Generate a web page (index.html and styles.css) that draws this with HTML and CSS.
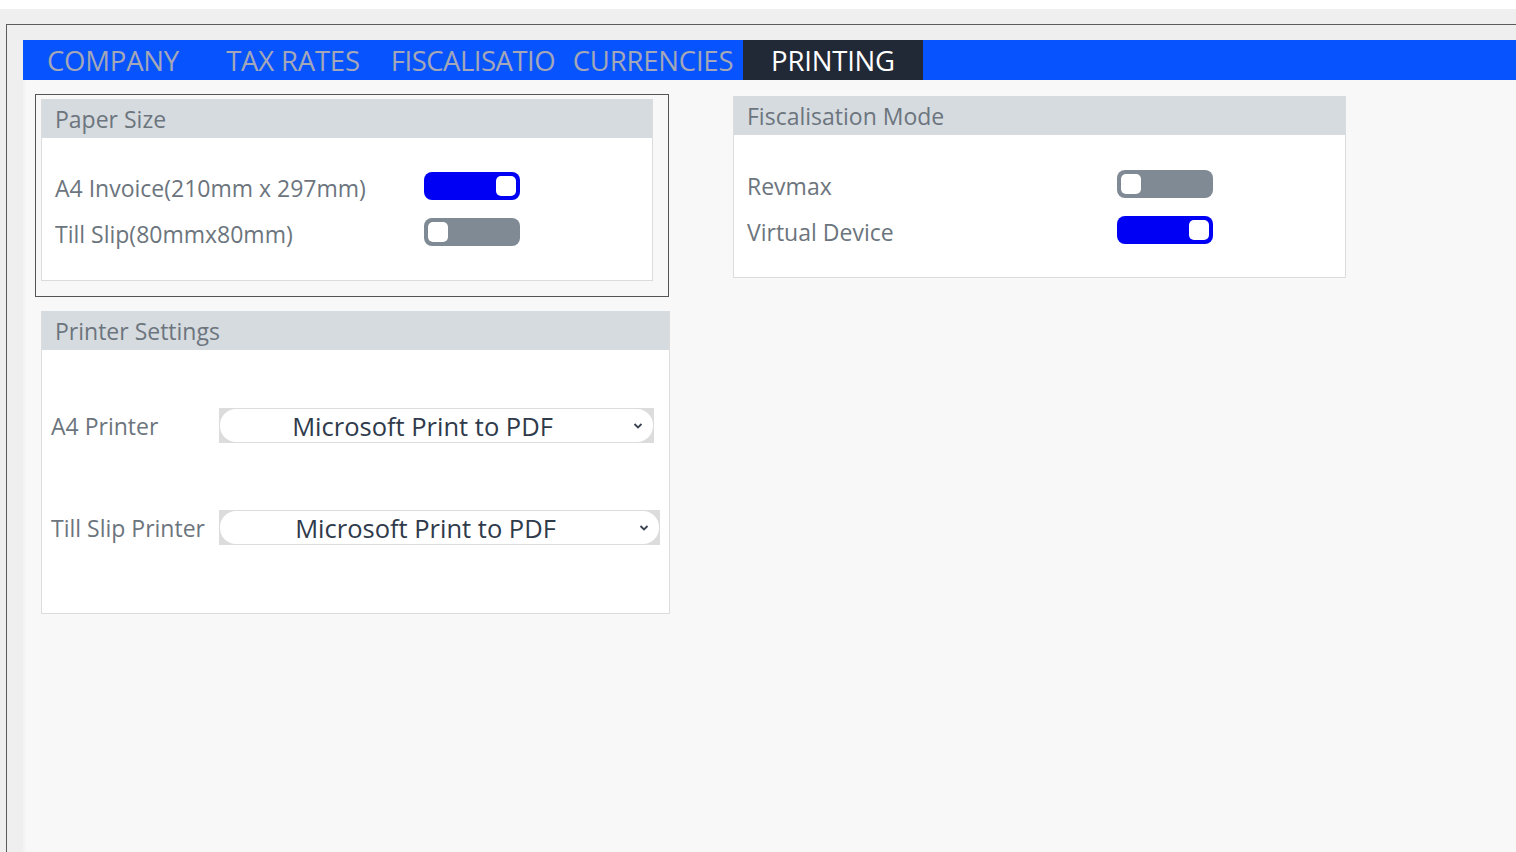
FILE: index.html
```html
<!DOCTYPE html>
<html>
<head>
<meta charset="utf-8">
<link rel="stylesheet" href="styles.css">
</head>
<body>
<div class="window">
  <div class="frame">
    <nav class="tabs">
      <div class="tab">COMPANY</div>
      <div class="tab">TAX RATES</div>
      <div class="tab tab-wrap">FISCALISATION</div>
      <div class="tab">CURRENCIES</div>
      <div class="tab active">PRINTING</div>
    </nav>
    <main class="content">
      <div class="col-left">
        <div class="focus-box">
          <section class="card card-paper">
            <header class="card-head">Paper Size</header>
            <div class="card-body toggles">
              <div class="row">
                <span class="label">A4 Invoice(210mm x 297mm)</span>
                <span class="switch on"><span class="knob"></span></span>
              </div>
              <div class="row">
                <span class="label">Till Slip(80mmx80mm)</span>
                <span class="switch"><span class="knob"></span></span>
              </div>
            </div>
          </section>
        </div>
        <section class="card card-printer">
          <header class="card-head">Printer Settings</header>
          <div class="card-body printers">
            <div class="prow">
              <span class="plabel">A4 Printer</span>
              <div class="select sel-a4">
                <div class="pill">
                  <span class="val">Microsoft Print to PDF</span>
                  <svg class="chev" width="10" height="8" viewBox="0 0 10 8"><path d="M1.5 2 L5 5.5 L8.5 2" fill="none" stroke="#3a4150" stroke-width="1.8"/></svg>
                </div>
              </div>
            </div>
            <div class="prow">
              <span class="plabel">Till Slip Printer</span>
              <div class="select sel-till">
                <div class="pill">
                  <span class="val">Microsoft Print to PDF</span>
                  <svg class="chev" width="10" height="8" viewBox="0 0 10 8"><path d="M1.5 2 L5 5.5 L8.5 2" fill="none" stroke="#3a4150" stroke-width="1.8"/></svg>
                </div>
              </div>
            </div>
          </div>
        </section>
      </div>
      <div class="col-right">
        <section class="card card-fiscal">
          <header class="card-head">Fiscalisation Mode</header>
          <div class="card-body toggles">
            <div class="row">
              <span class="label">Revmax</span>
              <span class="switch"><span class="knob"></span></span>
            </div>
            <div class="row">
              <span class="label">Virtual Device</span>
              <span class="switch on"><span class="knob"></span></span>
            </div>
          </div>
        </section>
      </div>
    </main>
  </div>
</div>
</body>
</html>
```

FILE: styles.css
```css
* { box-sizing: border-box; }
html, body { margin: 0; padding: 0; height: 100%; overflow: hidden; }
body {
  background: #ffffff;
  font-family: "Open Sans", "Noto Sans", sans-serif;
}
.window {
  margin-top: 9px;
  height: 843px;
  background: #efefef;
  padding: 15px 0 0 6px;
}
.frame {
  height: 100%;
  border-top: 1px solid #5c5c5c;
  border-left: 1px solid #5c5c5c;
  padding: 15px 0 0 16px;
  display: flex;
  flex-direction: column;
}
.tabs {
  height: 40px;
  background: #0753fe;
  display: flex;
  flex: none;
}
.tab {
  width: 180px;
  height: 40px;
  padding: 0 7px;
  text-align: center;
  white-space: nowrap;
  overflow: hidden;
  color: #a3a7b7;
  font-size: 27.5px;
  line-height: 42px;
  letter-spacing: -0.2px;
}
.tab-wrap {
  white-space: normal;
  word-break: break-all;
  line-height: 40px;
  padding: 1px 5px 0 5px;
  letter-spacing: -0.5px;
}
.tab.active {
  background: #212936;
  color: #ffffff;
}
.content {
  flex: 1;
  background: #f8f8f8;
  display: flex;
  align-items: flex-start;
  padding-left: 12px;
  box-shadow: inset 4px 0 4px -3px rgba(0,0,0,0.04);
}
.col-left { width: 635px; }
.col-right { margin-left: 63px; padding-top: 16px; }

.focus-box {
  margin-top: 14px;
  width: 634px;
  border: 1px solid #555;
  padding: 4px 14px 15px 5px;
}
.card {
  background: #fff;
  border: 1px solid #dcdcdc;
  border-top: none;
}
.card-head {
  height: 39px;
  background: #d6dbe0;
  color: #6c757d;
  font-size: 23px;
  line-height: 40px;
  padding-left: 13px;
}
.card-paper { width: 612px; height: 182px; }
.card-fiscal { width: 613px; height: 182px; }
.card-printer { width: 629px; height: 303px; margin: 14px 0 0 6px; }

.toggles { padding-top: 34px; }
.card-fiscal .toggles { padding-top: 35px; }
.row {
  display: flex;
  align-items: center;
  height: 28px;
  margin-bottom: 18px;
}
.label {
  width: 382px;
  padding-left: 13px;
  padding-top: 4px;
  color: #6c757d;
  font-size: 23px;
  white-space: nowrap;
}
.card-fiscal .label { width: 383px; }
.switch {
  width: 96px;
  height: 28px;
  border-radius: 8px;
  background: #7f8a94;
  display: flex;
  align-items: center;
  padding: 0 4px;
}
.switch.on {
  background: #0000f5;
  justify-content: flex-end;
}
.knob {
  width: 20px;
  height: 20px;
  border-radius: 5px;
  background: #fff;
}

.printers { padding-top: 58px; }
.prow {
  display: flex;
  align-items: center;
  height: 35px;
  margin-bottom: 67px;
}
.plabel {
  width: 177px;
  padding-left: 9px;
  color: #6c757d;
  font-size: 23px;
  white-space: nowrap;
}
.select {
  height: 35px;
  background: #dcdcdc;
  padding: 1px;
}
.sel-a4 { width: 435px; }
.sel-till { width: 441px; }
.pill {
  height: 100%;
  background: #fff;
  border-radius: 16px;
  display: flex;
  align-items: center;
  padding-right: 10px;
}
.val {
  flex: 1;
  text-align: center;
  color: #2f3a4b;
  font-size: 25.5px;
  margin-right: 8px;
  white-space: nowrap;
}
.chev { flex: none; }
```
